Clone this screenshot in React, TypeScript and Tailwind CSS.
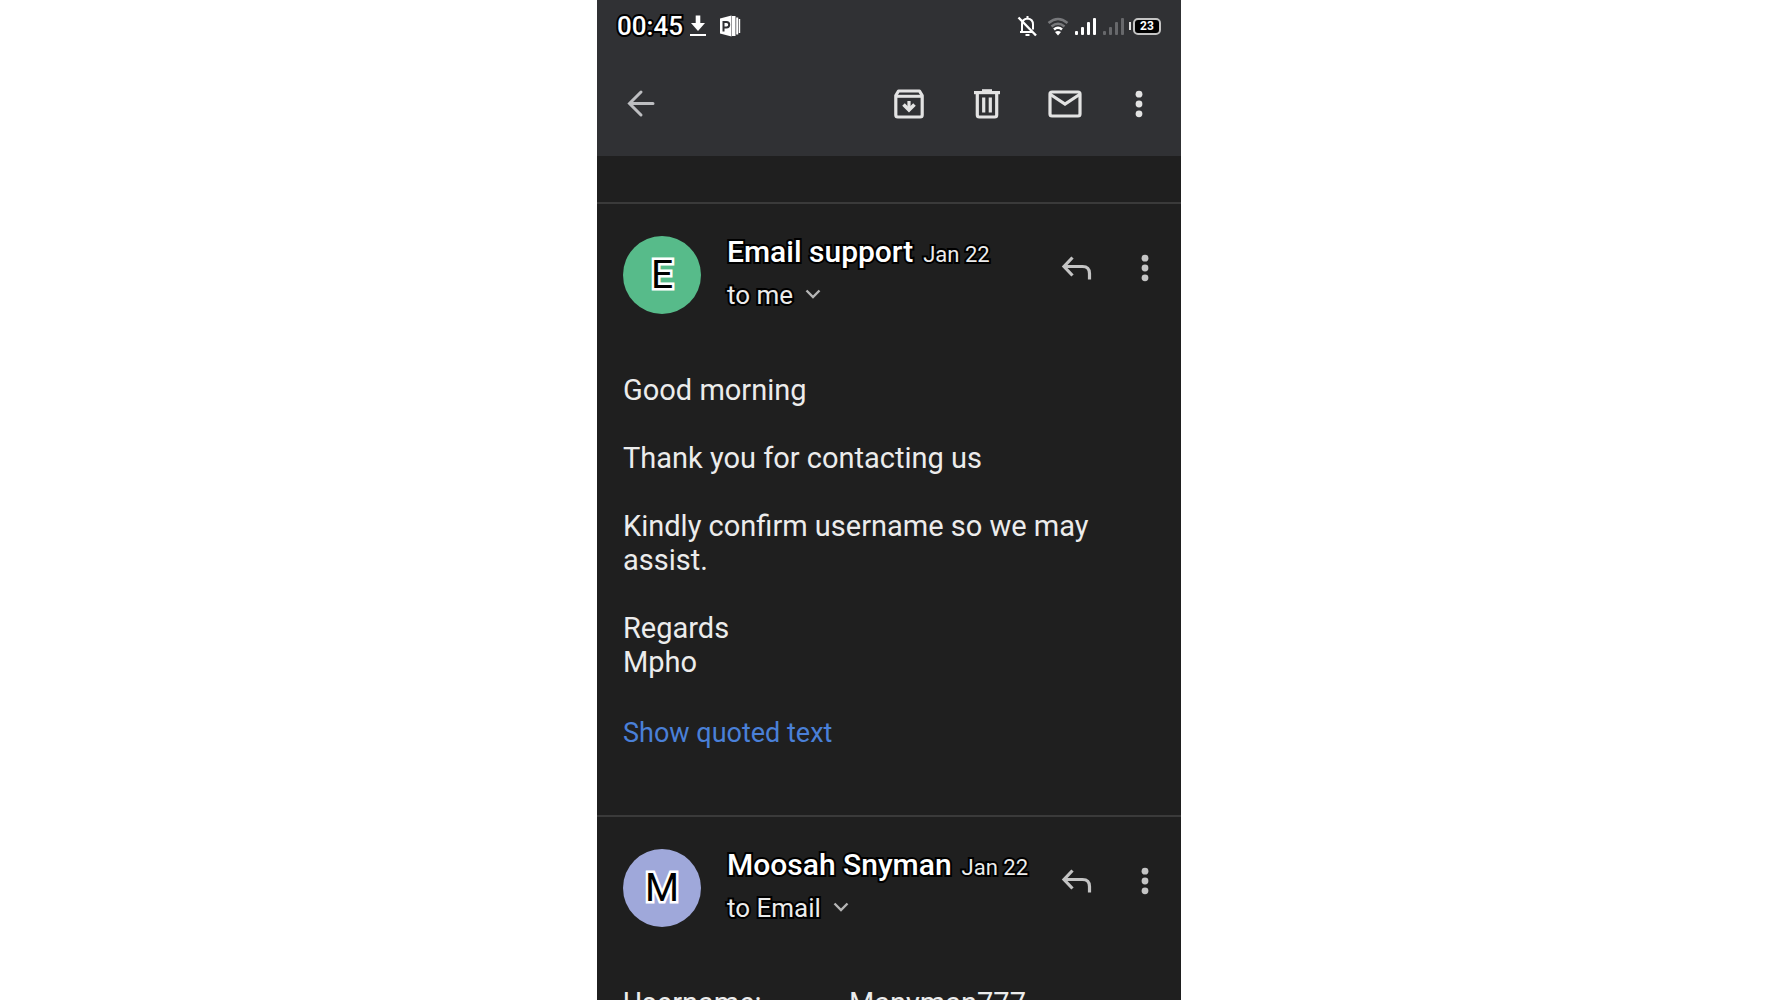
import React from 'react';

interface IconProps {
  className?: string;
}

interface MessageProps {
  initial: string;
  sender: string;
  recipient: string;
  date: string;
  avatarClass: string;
  children: React.ReactNode;
}

const outlined = '[paint-order:stroke_fill] [-webkit-text-stroke:4px_black]';

const BackIcon: React.FC<IconProps> = ({ className = '' }) => (
  <svg viewBox="0 0 40 40" className={`size-10 ${className}`} fill="none" stroke="currentColor" strokeWidth="3" strokeLinecap="round">
    <path d="M32 19.5H9M20 8 8.5 19.5 20 31" />
  </svg>
);

const ArchiveIcon: React.FC<IconProps> = ({ className = '' }) => (
  <svg viewBox="0 0 40 40" className={`size-10 ${className}`} fill="none" stroke="currentColor" strokeWidth="3.2" strokeLinejoin="round">
    <path d="M6.800 11.500V31a2 2 0 0 0 2 2h22.400a2 2 0 0 0 2-2V11.500L30.500 7h-21z" />
    <path d="M7 12.300h26" strokeWidth="3" />
    <path d="M20 17v8" />
    <path d="m14.500 20.500 5.500 5.500 5.500-5.500" strokeWidth="3.6" strokeLinejoin="miter" />
  </svg>
);

const TrashIcon: React.FC<IconProps> = ({ className = '' }) => (
  <svg viewBox="0 0 40 40" className={`size-10 ${className}`} fill="none" stroke="currentColor" strokeWidth="3.2">
    <path d="M7 8.600h26" />
    <path d="M15 6.800h10" />
    <path d="M10.300 9v22a2 2 0 0 0 2 2h15.400a2 2 0 0 0 2-2V9" />
    <path d="M16.700 13.500v15M23.300 13.500v15" />
  </svg>
);

const MailIcon: React.FC<IconProps> = ({ className = '' }) => (
  <svg viewBox="0 0 40 40" className={`size-10 ${className}`} fill="none" stroke="currentColor" strokeWidth="3.2">
    <rect x="5" y="8" width="30" height="24" rx="2" />
    <path d="m5.500 10.500 14.500 9.500 14.500-9.500" />
  </svg>
);

const MoreIcon: React.FC<IconProps> = ({ className = '' }) => (
  <svg viewBox="0 0 40 40" className={`size-10 ${className}`} fill="currentColor">
    <circle cx="20" cy="10.200" r="3.400" />
    <circle cx="20" cy="20" r="3.400" />
    <circle cx="20" cy="29.800" r="3.400" />
  </svg>
);

const ReplyIcon: React.FC<IconProps> = ({ className = '' }) => (
  <svg viewBox="0 0 40 40" className={`size-10 ${className}`} fill="none" stroke="currentColor" strokeWidth="3.2">
    <path d="M15.500 9.500 7 18.500l8.500 9M7.500 18.500h18q7 0 7 7V31.500" />
  </svg>
);

const ChevronIcon: React.FC<IconProps> = ({ className = '' }) => (
  <svg viewBox="0 0 16 16" className={`size-4 ${className}`} fill="none" stroke="currentColor" strokeWidth="2.400">
    <path d="m1.500 3.500 6.500 6.500 6.500-6.500" />
  </svg>
);

const SignalIcon: React.FC<IconProps> = ({ className = '' }) => (
  <svg viewBox="0 0 22 20" className={`h-5 w-[22px] ${className}`} fill="currentColor">
    <rect x="0" y="15" width="3" height="4" rx="1" />
    <rect x="6" y="11" width="3" height="8" rx="1" />
    <rect x="12" y="6" width="3" height="13" rx="1" />
    <rect x="18" y="2" width="3" height="17" rx="1" />
  </svg>
);

const StatusBar: React.FC = () => (
  <div className="flex h-[52px] items-center pl-5 pr-5 text-white">
    <span className={`text-[26px] font-medium leading-none ${outlined}`}>00:45</span>
    <svg viewBox="0 0 18 24" className="ml-[6px] h-6 w-[18px]" fill="currentColor">
      <path d="M6.700 1.500h4.600V9h4.700L9 17 2 9h4.700z" />
      <rect x="1" y="20" width="16" height="2" />
    </svg>
    <svg viewBox="0 0 22 24" className="ml-3 h-6 w-[22px]" fill="currentColor">
      <path d="M1 4.500 12.500 1.500v21L1 19.500z" />
      <path d="M13 2h3.500v20H13zM17.200 3.500h2v17h-2zM19.800 5h1.400v14h-1.400z" />
      <path d="M4.500 17.500V8h3q2.700 0 2.700 2.700t-2.700 2.700h-3" fill="none" stroke="#303134" strokeWidth="2" />
    </svg>

    <div className="ml-auto flex items-center">
      <svg viewBox="0 0 20 22" className="h-[22px] w-5" fill="none" stroke="currentColor" strokeWidth="2">
        <path d="M5 16.500V9.500Q5 4 10.500 3.500 16 4 16 9.500v5M3 17h13M10.500 1v3" />
        <path d="M8.500 20h4" />
        <path d="m1.500 2.500 17.500 18" strokeWidth="2.400" />
      </svg>
      <svg viewBox="0 0 22 20" className="ml-[10px] h-5 w-[22px]" fill="none" strokeWidth="2.600" stroke="currentColor">
        <path d="M1.500 7q9.500-8 19 0M4.500 10.500q6.500-5.500 13 0" stroke="#77787b" />
        <path d="M7 13.500q4-3.500 8 0" />
        <path d="m8 16 3 3.500 3-3.500q-3-2-6 0z" fill="currentColor" stroke="none" />
      </svg>
      <SignalIcon className="ml-[6px]" />
      <SignalIcon className="ml-[6px] text-[#67686b]" />
      <span className="ml-1 h-2 w-[2px] bg-[#dddddd]"></span>
      <span className="ml-[2px] flex h-[17px] w-7 items-center justify-center rounded-[5px] border-2 border-[#c4c4c4] bg-black text-[12px] font-bold leading-none">
        23
      </span>
    </div>
  </div>
);

const Toolbar: React.FC = () => (
  <div className="flex h-[104px] items-center pl-6 pr-[22px] text-[#e3e3e3]">
    <button type="button" aria-label="Back" className="text-[#bdbec1]">
      <BackIcon />
    </button>
    <div className="ml-auto flex items-center gap-[38px]">
      <button type="button" aria-label="Archive"><ArchiveIcon /></button>
      <button type="button" aria-label="Delete"><TrashIcon /></button>
      <button type="button" aria-label="Mark as unread"><MailIcon /></button>
      <button type="button" aria-label="More options" className="-ml-1"><MoreIcon /></button>
    </div>
  </div>
);

const Message: React.FC<MessageProps> = ({ initial, sender, recipient, date, avatarClass, children }) => (
  <article className="border-t-2 border-[#3a3a3a] px-[26px] pt-8">
    <header className="flex items-start">
      <div className={`flex size-[78px] shrink-0 items-center justify-center rounded-full text-[39px] leading-none text-black ${avatarClass}`}>
        <span className="[paint-order:stroke_fill] [-webkit-text-stroke:5px_white]">{initial}</span>
      </div>
      <div className="ml-[26px] text-white">
        <div className="flex items-baseline gap-[10px] leading-8">
          <h2 className={`text-[30px] font-medium ${outlined}`}>{sender}</h2>
          <span className={`text-[22px] text-[#ececec] ${outlined}`}>{date}</span>
        </div>
        <button type="button" className="mt-2 flex items-center gap-3 leading-8 text-[#ececec]">
          <span className={`text-[26px] ${outlined}`}>to {recipient}</span>
          <ChevronIcon className="text-[#b5b5b5]" />
        </button>
      </div>
      <div className="ml-auto mt-3 -mr-[10px] flex gap-7 text-[#c4c4c4]">
        <button type="button" aria-label="Reply"><ReplyIcon /></button>
        <button type="button" aria-label="Message options"><MoreIcon /></button>
      </div>
    </header>
    <div className="mt-[59px] text-[29px] leading-[34px] text-[#ececec]">{children}</div>
  </article>
);

const App: React.FC = () => {
  return (
    <div className="h-screen overflow-hidden bg-white font-[Roboto,sans-serif]">
      <main className="mx-auto min-h-full w-full max-w-[584px] bg-[#1f1f1f]">
        <div className="bg-[#303134]">
          <StatusBar />
          <Toolbar />
        </div>

        <div className="pt-[46px]">
          <Message initial="E" sender="Email support" recipient="me" date="Jan 22" avatarClass="bg-[#57bb8a]">
            <div className="space-y-[34px]">
              <p>Good morning</p>
              <p>Thank you for contacting us</p>
              <p>Kindly confirm username so we may assist.</p>
              <p>
                Regards
                <br />
                Mpho
              </p>
            </div>
            <a href="#quoted" className="mt-9 mb-16 block text-[27px] leading-9 text-[#4a80d8]">
              Show quoted text
            </a>
          </Message>

          <Message initial="M" sender="Moosah Snyman" recipient="Email" date="Jan 22" avatarClass="bg-[#9fa8da]">
            <dl className="flex">
              <dt className="w-[226px]">Username:</dt>
              <dd>Manyman777</dd>
            </dl>
          </Message>
        </div>
      </main>
    </div>
  );
};

export default App;
